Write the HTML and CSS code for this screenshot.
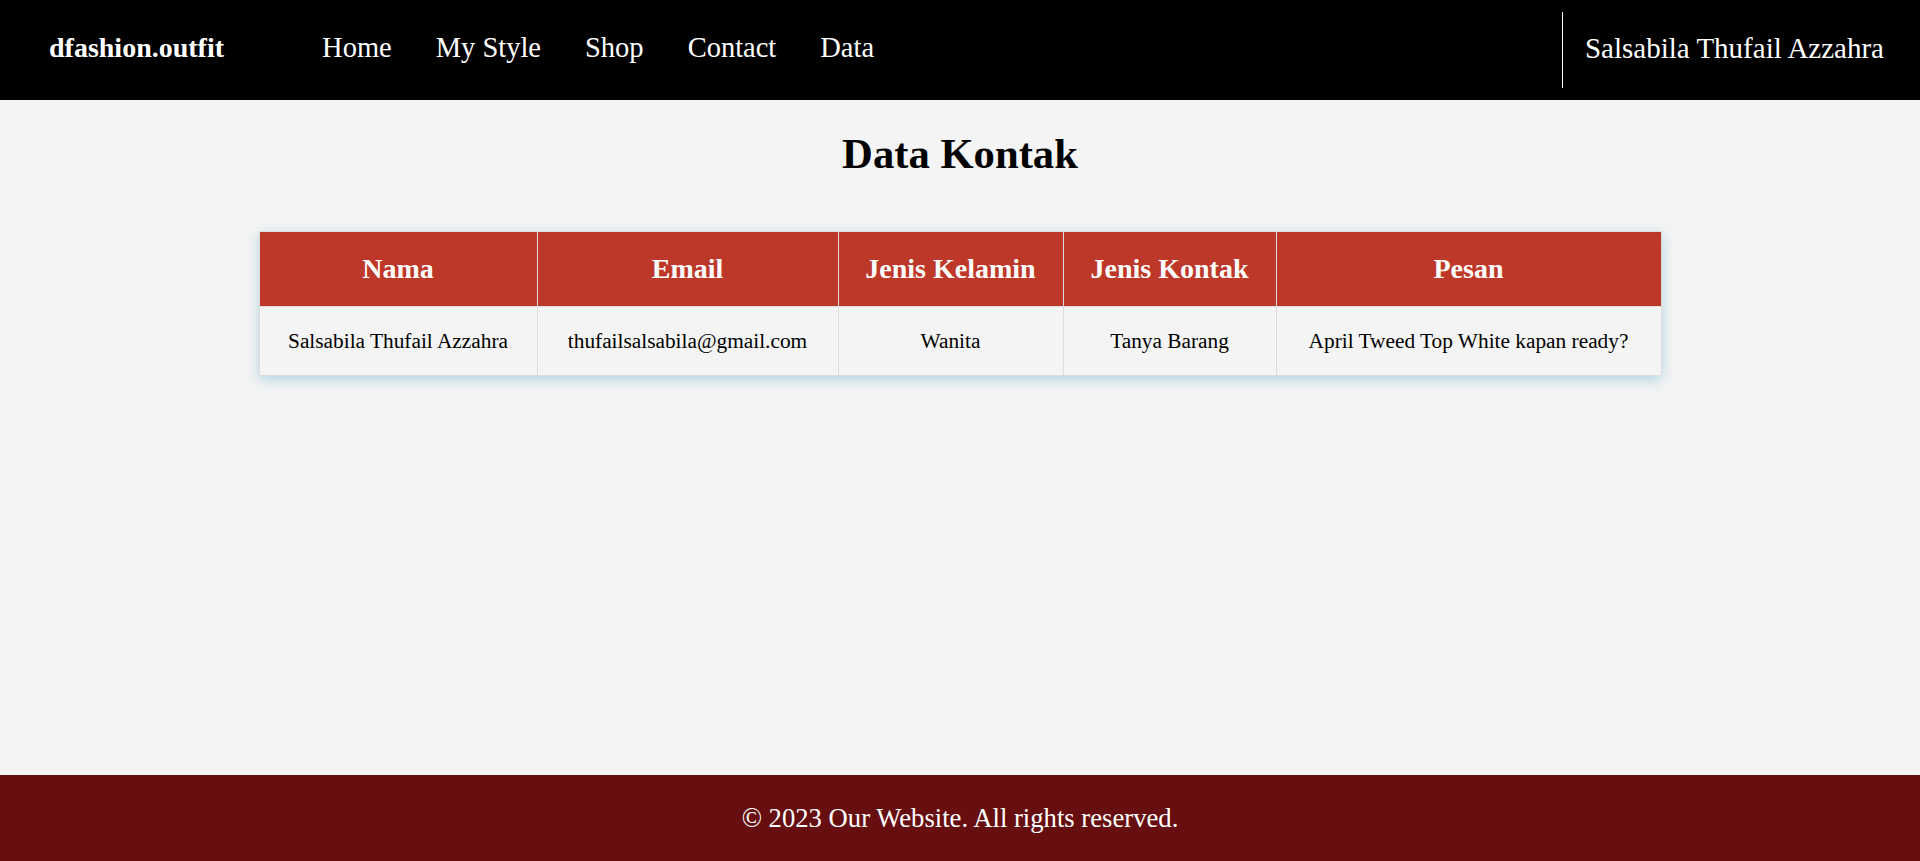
FILE: index.html
```html
<!DOCTYPE html>
<html lang="id">
<head>
<meta charset="utf-8">
<title>Data Kontak</title>
<link rel="stylesheet" href="styles.css">
</head>
<body>
<header class="topbar">
  <div class="logo">dfashion.outfit</div>
  <nav class="menu">
    <a href="#">Home</a>
    <a href="#">My Style</a>
    <a href="#">Shop</a>
    <a href="#">Contact</a>
    <a href="#">Data</a>
  </nav>
  <div class="user">Salsabila Thufail Azzahra</div>
</header>
<main class="content">
  <h1 class="title">Data Kontak</h1>
  <table class="data">
    <thead>
      <tr>
        <th class="c-nama">Nama</th>
        <th class="c-email">Email</th>
        <th class="c-jk">Jenis Kelamin</th>
        <th class="c-kontak">Jenis Kontak</th>
        <th class="c-pesan">Pesan</th>
      </tr>
    </thead>
    <tbody>
      <tr>
        <td>Salsabila Thufail Azzahra</td>
        <td>thufailsalsabila@gmail.com</td>
        <td>Wanita</td>
        <td>Tanya Barang</td>
        <td>April Tweed Top White kapan ready?</td>
      </tr>
    </tbody>
  </table>
</main>
<footer class="foot">
  <p>&copy; 2023 Our Website. All rights reserved.</p>
</footer>
</body>
</html>
```
FILE: styles.css
```css
html, body {
  margin: 0;
  padding: 0;
}
body {
  font-family: "Liberation Serif", "Times New Roman", serif;
  font-size: 21.33px;
  background: #f4f4f4;
  color: #000;
  min-height: 100vh;
  display: flex;
  flex-direction: column;
}
.topbar {
  background: #000;
  color: #fff;
  height: 100px;
  box-sizing: border-box;
  display: flex;
  align-items: center;
  padding: 0 36px 0 49px;
}
.logo {
  font-weight: bold;
  font-size: 28px;
  padding-bottom: 4px;
}
.menu {
  display: flex;
  gap: 44px;
  margin-left: 98px;
  padding-bottom: 4px;
}
.menu a {
  color: #fff;
  text-decoration: none;
  font-size: 28.5px;
}
.user {
  margin-left: auto;
  height: 76px;
  border-left: 1px solid #fff;
  padding-left: 22px;
  display: flex;
  align-items: center;
  font-size: 29px;
  box-sizing: border-box;
  padding-bottom: 4px;
}
.content {
  flex: 1;
}
.title {
  font-size: 42.67px;
  text-align: center;
  margin: 28.6px 0 53px;
}
.data {
  width: 1402px;
  margin: 0 auto;
  border-collapse: collapse;
  table-layout: fixed;
  box-shadow: 0 4px 12px rgba(100, 175, 205, 0.45);
}
.data th,
.data td {
  box-sizing: border-box;
  border: 1px solid #ddd;
  text-align: center;
}
.data th {
  background: #bd3828;
  color: #fff;
  font-size: 28px;
  line-height: 32px;
  padding: 21px 8px;
}
.data td {
  background: #f4f4f4;
  font-size: 21.33px;
  line-height: 24px;
  padding: 22px 8px;
}
.c-nama { width: 278px; }
.c-email { width: 301px; }
.c-jk { width: 225px; }
.c-kontak { width: 213px; }
.c-pesan { width: 385px; }
.foot {
  background: #670f10;
  color: #fff;
  height: 86px;
  display: flex;
  align-items: center;
  justify-content: center;
}
.foot p {
  margin: 0;
  font-size: 26.67px;
}
```
